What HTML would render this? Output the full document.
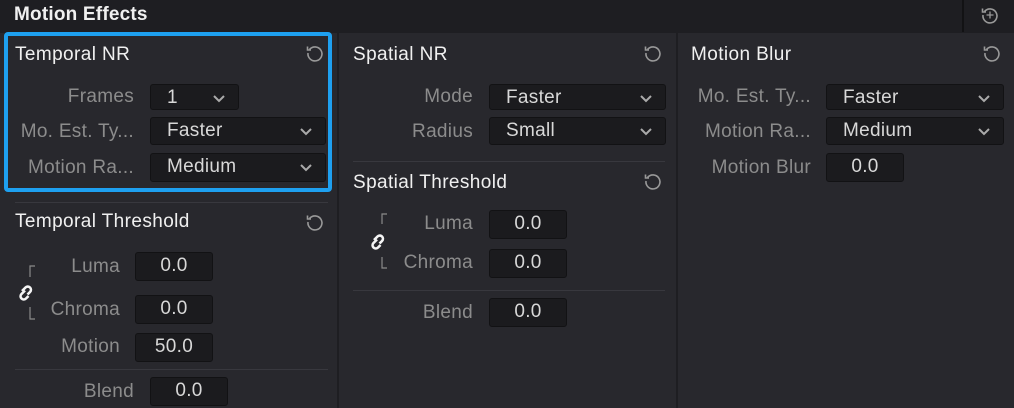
<!DOCTYPE html>
<html><head><meta charset="utf-8"><style>
*{margin:0;padding:0;box-sizing:border-box}
body{width:1014px;height:408px;background:#1e1e22;font-family:"Liberation Sans","DejaVu Sans",sans-serif;overflow:hidden;position:relative}
.a{position:absolute}
.hdr{left:0;top:0;width:1014px;height:32px;background:#1e1e22}
.col{top:33px;height:375px;background:#28282d}
.t{color:#f0f0f0;font-size:19px;letter-spacing:0.4px;white-space:nowrap}
.l{color:#8c8c8c;font-size:19px;letter-spacing:0.3px;text-align:right;white-space:nowrap}
.f{background:#1b1b1e;border:1px solid #121214;border-radius:3px;color:#d8d8d8;font-size:19px;letter-spacing:0.3px;line-height:26px;padding-left:16px}
.v{text-align:center;padding-left:0}
.dd svg{position:absolute;right:12px;top:9px}
.ln{height:1px;background:#38383e}
</style></head><body>
<div class="a hdr"></div>
<div class="a t" style="left:14px;top:4px;font-weight:bold;font-size:19px;letter-spacing:0.2px">Motion Effects</div>
<div class="a" style="left:962px;top:0;width:2px;height:32px;background:#121214"></div>
<svg class="a" style="left:980px;top:5px" width="20" height="20" viewBox="0 0 20 20" fill="none" stroke="#999" stroke-width="1.6"><path d="M4.5 6.5A7 7 0 1 1 3 10"/><path d="M2.5 3.5v3.5h3.5"/><path d="M10 6.5v7M6.5 10h7" stroke-width="1.3"/></svg>

<div class="a col" style="left:0;width:337px"></div>
<div class="a col" style="left:339px;width:337px"></div>
<div class="a col" style="left:678px;width:336px"></div>

<div class="a" style="left:4px;top:32px;width:328px;height:160px;border:4px solid #1ea0f0;border-radius:4px"></div>

<!-- col1 -->
<div class="a t" style="left:15px;top:44px">Temporal NR</div>
<div class="a l" style="left:0;width:134px;top:86px">Frames</div>
<div class="a f dd" style="left:150px;top:84px;width:89px;height:26px">1<svg width="14" height="9" viewBox="0 0 14 9"><path d="M2 2l5 5 5-5" stroke="#aaa" stroke-width="2" fill="none"/></svg></div>
<div class="a l" style="left:0;width:134px;top:121px">Mo. Est. Ty...</div>
<div class="a f dd" style="left:150px;top:117px;width:176px;height:28px">Faster<svg width="14" height="9" viewBox="0 0 14 9"><path d="M2 2l5 5 5-5" stroke="#aaa" stroke-width="2" fill="none"/></svg></div>
<div class="a l" style="left:0;width:134px;top:157px">Motion Ra...</div>
<div class="a f dd" style="left:150px;top:153px;width:176px;height:29px">Medium<svg width="14" height="9" viewBox="0 0 14 9"><path d="M2 2l5 5 5-5" stroke="#aaa" stroke-width="2" fill="none"/></svg></div>
<div class="a ln" style="left:15px;top:202px;width:313px"></div>
<div class="a t" style="left:15px;top:211px">Temporal Threshold</div>
<div class="a l" style="left:0;width:120px;top:256px">Luma</div>
<div class="a f v" style="left:135px;top:252px;width:78px;height:29px">0.0</div>
<div class="a l" style="left:0;width:120px;top:299px">Chroma</div>
<div class="a f v" style="left:135px;top:295px;width:78px;height:29px">0.0</div>
<div class="a l" style="left:0;width:120px;top:336px">Motion</div>
<div class="a f v" style="left:135px;top:333px;width:78px;height:29px">50.0</div>
<div class="a ln" style="left:15px;top:369px;width:313px"></div>
<div class="a l" style="left:0;width:134px;top:381px">Blend</div>
<div class="a f v" style="left:150px;top:377px;width:78px;height:29px">0.0</div>
<svg class="a" style="left:14px;top:262px" width="30" height="60" viewBox="0 0 30 60" fill="none"><path d="M16 15V4h5M16 45v12h5" stroke="#8a8a8a" stroke-width="1.2"/><g stroke="#f4f4f4" stroke-width="2.6"><path d="M8 29l3.5-3.5a3 3 0 0 1 4.5 4.5l-2.5 2.5"/><path d="M11 28.5l-3.5 3.5a3 3 0 0 0 4.5 4.5l2.5-2.5"/></g></svg>

<!-- col2 -->
<div class="a t" style="left:353px;top:44px">Spatial NR</div>
<div class="a l" style="left:340px;width:133px;top:86px">Mode</div>
<div class="a f dd" style="left:489px;top:84px;width:177px;height:26px">Faster<svg width="14" height="9" viewBox="0 0 14 9"><path d="M2 2l5 5 5-5" stroke="#aaa" stroke-width="2" fill="none"/></svg></div>
<div class="a l" style="left:340px;width:133px;top:121px">Radius</div>
<div class="a f dd" style="left:489px;top:117px;width:177px;height:28px">Small<svg width="14" height="9" viewBox="0 0 14 9"><path d="M2 2l5 5 5-5" stroke="#aaa" stroke-width="2" fill="none"/></svg></div>
<div class="a ln" style="left:353px;top:161px;width:312px"></div>
<div class="a t" style="left:353px;top:172px">Spatial Threshold</div>
<div class="a l" style="left:340px;width:133px;top:213px">Luma</div>
<div class="a f v" style="left:489px;top:210px;width:78px;height:29px">0.0</div>
<div class="a l" style="left:340px;width:133px;top:252px">Chroma</div>
<div class="a f v" style="left:489px;top:249px;width:78px;height:29px">0.0</div>
<div class="a ln" style="left:353px;top:290px;width:312px"></div>
<div class="a l" style="left:340px;width:133px;top:302px">Blend</div>
<div class="a f v" style="left:489px;top:298px;width:78px;height:29px">0.0</div>
<svg class="a" style="left:366px;top:208px" width="30" height="66" viewBox="0 0 30 66" fill="none"><path d="M16 16V6h5M16 49v11h5" stroke="#8a8a8a" stroke-width="1.2"/><g stroke="#f4f4f4" stroke-width="2.6"><path d="M8 32l3.5-3.5a3 3 0 0 1 4.5 4.5l-2.5 2.5"/><path d="M11 31.5l-3.5 3.5a3 3 0 0 0 4.5 4.5l2.5-2.5"/></g></svg>

<!-- col3 -->
<div class="a t" style="left:691px;top:44px">Motion Blur</div>
<div class="a l" style="left:678px;width:133px;top:86px">Mo. Est. Ty...</div>
<div class="a f dd" style="left:826px;top:84px;width:178px;height:26px">Faster<svg width="14" height="9" viewBox="0 0 14 9"><path d="M2 2l5 5 5-5" stroke="#aaa" stroke-width="2" fill="none"/></svg></div>
<div class="a l" style="left:678px;width:133px;top:121px">Motion Ra...</div>
<div class="a f dd" style="left:826px;top:117px;width:178px;height:28px">Medium<svg width="14" height="9" viewBox="0 0 14 9"><path d="M2 2l5 5 5-5" stroke="#aaa" stroke-width="2" fill="none"/></svg></div>
<div class="a l" style="left:678px;width:133px;top:157px">Motion Blur</div>
<div class="a f v" style="left:826px;top:153px;width:78px;height:29px">0.0</div>

<!-- reset icons -->
<svg class="a" style="left:305px;top:43px" width="20" height="20" viewBox="0 0 20 20" fill="none" stroke="#999" stroke-width="1.6"><path d="M4.5 6.5A7 7 0 1 1 3 10"/><path d="M2.5 3.5v3.5h3.5"/></svg>
<svg class="a" style="left:305px;top:212px" width="20" height="20" viewBox="0 0 20 20" fill="none" stroke="#999" stroke-width="1.6"><path d="M4.5 6.5A7 7 0 1 1 3 10"/><path d="M2.5 3.5v3.5h3.5"/></svg>
<svg class="a" style="left:643px;top:43px" width="20" height="20" viewBox="0 0 20 20" fill="none" stroke="#999" stroke-width="1.6"><path d="M4.5 6.5A7 7 0 1 1 3 10"/><path d="M2.5 3.5v3.5h3.5"/></svg>
<svg class="a" style="left:643px;top:171px" width="20" height="20" viewBox="0 0 20 20" fill="none" stroke="#999" stroke-width="1.6"><path d="M4.5 6.5A7 7 0 1 1 3 10"/><path d="M2.5 3.5v3.5h3.5"/></svg>
<svg class="a" style="left:982px;top:43px" width="20" height="20" viewBox="0 0 20 20" fill="none" stroke="#999" stroke-width="1.6"><path d="M4.5 6.5A7 7 0 1 1 3 10"/><path d="M2.5 3.5v3.5h3.5"/></svg>
</body></html>
